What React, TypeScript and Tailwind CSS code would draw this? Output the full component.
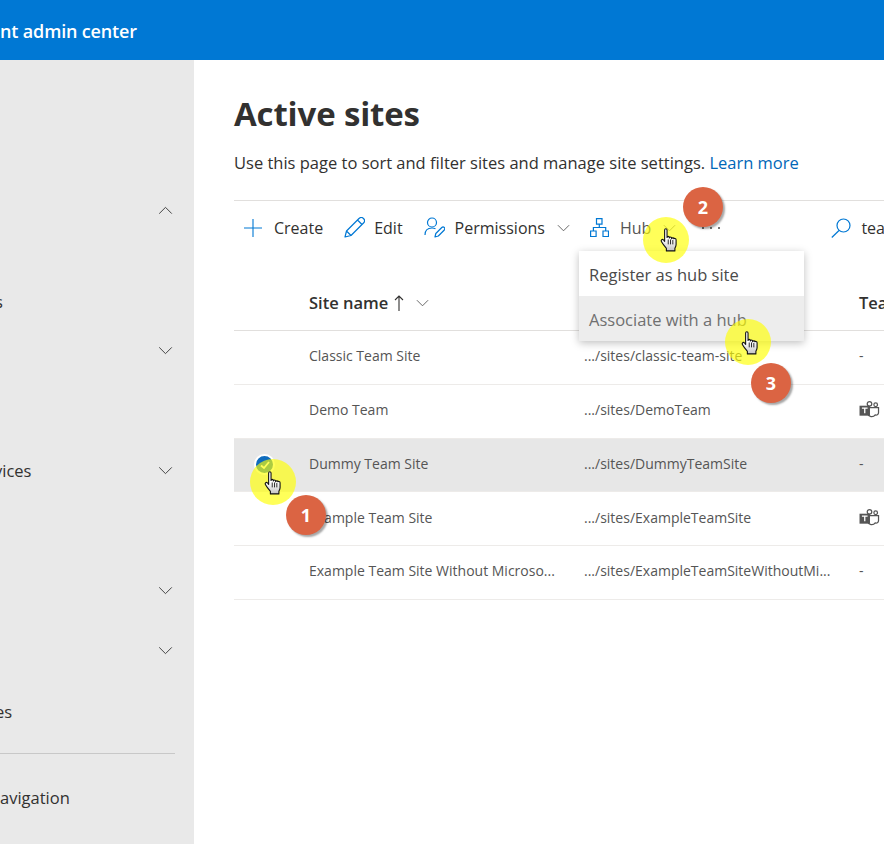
const sideRows = [
  { label: "", gap: "mt-0", chevron: "up", shift: "" },
  { label: "s", gap: "mt-[52px]", chevron: "", shift: "-ml-[5px]" },
  { label: "", gap: "mt-2", chevron: "down", shift: "" },
  { label: "vices", gap: "mt-20", chevron: "down", shift: "-ml-[6px] pt-[3px]" },
  { label: "", gap: "mt-20", chevron: "down", shift: "" },
  { label: "", gap: "mt-5", chevron: "down", shift: "" },
  { label: "es", gap: "mt-[22px]", chevron: "", shift: "-ml-[5px]" },
];

const sites = [
  { name: "Classic Team Site", url: ".../sites/classic-team-site", teams: false },
  { name: "Demo Team", url: ".../sites/DemoTeam", teams: true },
  { name: "Dummy Team Site", url: ".../sites/DummyTeamSite", teams: false, selected: true },
  { name: "Example Team Site", url: ".../sites/ExampleTeamSite", teams: true },
  { name: "Example Team Site Without Microso...", url: ".../sites/ExampleTeamSiteWithoutMi...", teams: false },
];

const ThinChevron = ({ className }: { className: string }) => (
  <svg viewBox="0 0 16 10" className={className} fill="none" stroke="currentColor" strokeWidth="1.1">
    <path d="M1 1.500 8 8.500 15 1.500" />
  </svg>
);

const TeamsIcon = () => (
  <svg viewBox="0 0 22 20" className="h-[19px] w-[21px] text-[#555555]">
    <circle cx="11" cy="4" r="2.400" fill="none" stroke="currentColor" strokeWidth="1.300" />
    <circle cx="17.500" cy="5" r="1.900" fill="none" stroke="currentColor" strokeWidth="1.300" />
    <path d="M8 8h12.500v5.500a2.500 2.500 0 0 1-3.500 2.200 4.500 4.500 0 0 1-8-1.500" fill="none" stroke="currentColor" strokeWidth="1.300" />
    <rect x="0.500" y="6" width="11" height="10.500" fill="currentColor" />
    <path d="M3 8.500h6M6 8.500v5.500" stroke="#ffffff" strokeWidth="1.400" />
  </svg>
);

const Hand = ({ className }: { className: string }) => (
  <svg viewBox="0 0 16 22" className={className}>
    <defs>
      <linearGradient id="hand" x1="0" y1="0" x2="0" y2="1">
        <stop offset="0.45" stopColor="#ffffff" />
        <stop offset="1" stopColor="#c4c4c4" />
      </linearGradient>
    </defs>
    <path
      d="M4 1.800C4 .4 6.200.4 6.200 1.800V8.600c0-1.200 2.100-1.200 2.100 0v.6c0-1.200 2.100-1.200 2.100 0v.7c0-1.100 2.100-1.100 2.100 0 .1-.5 2-.6 2 .8v4.400c0 1.500-.6 2.400-1.100 3.400V21H5.600v-2.300C4.500 17.400 2.600 15.200 1 12.400.3 11.200 1.900 9.700 3 11l1 1.300Z"
      fill="url(#hand)"
      stroke="#111111"
      strokeWidth="1"
      strokeLinejoin="round"
    />
    <path d="M7.300 10.500v4.500M9.400 10.500v4.500M11.500 11v4" stroke="#111111" strokeWidth="0.800" />
  </svg>
);

const Badge = ({ n, className }: { n: number; className: string }) => (
  <div
    className={`absolute flex h-10 w-10 items-center justify-center rounded-full bg-[#db6443] text-lg font-bold text-white shadow-[2px_2px_2px_rgba(0,0,0,0.35)] ${className}`}
  >
    {n}
  </div>
);

export default function App() {
  return (
    <div className="relative h-[844px] w-[884px] overflow-hidden bg-white font-['Open_Sans',sans-serif] text-[#323130]">
      <header className="flex h-[60px] items-center bg-[#0078d4] pt-[2px] text-[18px] font-semibold tracking-[-0.15px] text-white">
        <span>nt admin center</span>
      </header>

      <div className="flex h-[784px]">
        <nav className="w-[194px] shrink-0 bg-[#e9e9e9] pt-[130px] text-[16.5px] text-[#323130]">
          {sideRows.map((row, i) => (
            <div key={i} className={`flex h-10 items-center justify-between pr-[21px] ${row.gap}`}>
              <span className={row.shift}>{row.label}</span>
              {row.chevron === "up" && <ThinChevron className="h-[9px] w-[15px] rotate-180 text-[#444444]" />}
              {row.chevron === "down" && <ThinChevron className="h-[9px] w-[15px] text-[#444444]" />}
            </div>
          ))}
          <div className="mt-[21px] mr-[19px] border-t border-[#c8c8c8]" />
          <div className="mt-6 flex h-10 items-center">avigation</div>
        </nav>

        <main className="w-[690px] shrink-0 pl-10 pt-[33px]">
          <h1 className="text-[33px] leading-[42px] font-bold tracking-[-0.15px]">Active sites</h1>
          <p className="mt-4 whitespace-nowrap text-[16.5px] leading-6">
            Use this page to sort and filter sites and manage site settings.{" "}
            <span className="text-[#0067b8]">Learn more</span>
          </p>

          <div className="mt-[25px] flex h-[54px] items-center whitespace-nowrap border-t border-[#e1dfdd] pl-[10px] text-[16px]">
            <svg viewBox="0 0 18 18" className="h-[18px] w-[18px] shrink-0 text-[#0078d4]" fill="none" stroke="currentColor" strokeWidth="1.100">
              <path d="M9 0v18M0 9h18" />
            </svg>
            <span className="ml-3">Create</span>
            <svg viewBox="0 0 21 21" className="ml-[21px] h-[21px] w-[21px] shrink-0 text-[#0078d4]" fill="none" stroke="currentColor" strokeWidth="1.200">
              <path d="M1 20l1.500-6L15 1.500a2.500 2.500 0 0 1 4.500 4.500L7 18.500ZM2.500 14 7 18.500M13.500 3 18 7.500" strokeLinejoin="round" />
            </svg>
            <span className="ml-[9px]">Edit</span>
            <svg viewBox="0 0 21 21" className="ml-[21px] h-[21px] w-[21px] shrink-0 text-[#0078d4]" fill="none" stroke="currentColor" strokeWidth="1.200">
              <circle cx="8" cy="5.500" r="4.500" />
              <path d="M1 18c0-4 2-7 7-7 1.500 0 2.500.3 3.500.8M11 20l.8-3.500 6-6a1.700 1.700 0 0 1 2.500 2.500l-6 6Z" strokeLinejoin="round" />
            </svg>
            <span className="ml-[10px]">Permissions</span>
            <ThinChevron className="ml-3 h-2 w-[13px] shrink-0 text-[#555555]" />
            <svg viewBox="0 0 19 19" className="ml-5 h-[19px] w-[19px] shrink-0 text-[#0078d4]" fill="none" stroke="currentColor" strokeWidth="1.200">
              <path d="M6.500.6h5.500v5.500H6.500ZM.6 13h5.500v5.500H.6ZM13 13h5.500v5.500H13ZM9.300 6v3.500M3.400 13V9.500h12.300V13" />
            </svg>
            <span className="ml-[11px] text-[#555555]">Hub</span>
            <ThinChevron className="ml-[11px] h-2 w-[15px] shrink-0 text-[#777777]" />
            <span className="ml-[25px] flex shrink-0 gap-[6px]">
              <i className="h-[2px] w-[2px] rounded-full bg-[#444444]" />
              <i className="h-[2px] w-[2px] rounded-full bg-[#444444]" />
              <i className="h-[2px] w-[2px] rounded-full bg-[#444444]" />
            </span>
            <svg viewBox="0 0 20 20" className="ml-[111px] h-5 w-5 shrink-0 text-[#0078d4]" fill="none" stroke="currentColor" strokeWidth="1.200">
              <circle cx="12.500" cy="7.500" r="6.500" />
              <path d="M8 12.500.8 19.500" />
            </svg>
            <span className="ml-[10px] shrink-0">team</span>
          </div>

          <div className="mt-[22px] flex h-[55px] items-center whitespace-nowrap border-b border-[#e1dfdd] text-[16.5px] font-semibold">
            <div className="flex w-[625px] shrink-0 items-center pl-[75px]">
              <span>Site name</span>
              <svg viewBox="0 0 10 16" className="ml-[6px] h-4 w-[10px] text-[#323130]" fill="none" stroke="currentColor" strokeWidth="1.100">
                <path d="M5 16V1M1 5l4-4 4 4" />
              </svg>
              <ThinChevron className="ml-[11px] h-2 w-[15px] text-[#555555]" />
            </div>
            <span className="shrink-0">Teams</span>
          </div>

          {sites.map((site) => (
            <div
              key={site.name}
              className={`flex h-[53.8px] items-center whitespace-nowrap border-b border-[#edebe9] pb-[3.5px] text-[14px] text-[#555555] ${site.selected ? "bg-[#e7e7e7]" : ""}`}
            >
              <div className="flex w-[75px] shrink-0 pl-[20px] pt-[3px]">
                {site.selected && (
                  <div className="flex h-[21px] w-[21px] items-center justify-center rounded-full border-2 border-white bg-[#0f6cbd]">
                    <svg viewBox="0 0 12 12" className="h-3 w-3" fill="none" stroke="#ffffff" strokeWidth="1.800">
                      <path d="M2 6.500 5 9l5-6" />
                    </svg>
                  </div>
                )}
              </div>
              <div className="w-[275px] shrink-0">{site.name}</div>
              <div className="w-[275px] shrink-0">{site.url}</div>
              {site.teams ? <TeamsIcon /> : <span>-</span>}
            </div>
          ))}
        </main>
      </div>

      {/* dropdown over the table */}
      <div className="absolute left-[579px] top-[251px] w-[225px] bg-white text-[16.5px] shadow-[0_2px_8px_rgba(0,0,0,0.25)]">
        <div className="flex h-[45px] items-center pl-[10px] pt-[3px] text-[#4a4a4a]">Register as hub site</div>
        <div className="flex h-[45px] items-center bg-[#ededed] pl-[10px] pt-[3px] text-[#707070]">Associate with a hub</div>
      </div>

      {/* tutorial highlights */}
      <div className="absolute left-[250px] top-[459px] h-[46px] w-[46px] rounded-full bg-[#ffff00]/65" />
      <div className="absolute left-[643px] top-[217px] h-[46px] w-[46px] rounded-full bg-[#ffff00]/65" />
      <div className="absolute left-[725px] top-[319px] h-[46px] w-[46px] rounded-full bg-[#ffff00]/65" />
      <Hand className="absolute left-[264px] top-[471px] h-6 w-[18px]" />
      <Hand className="absolute left-[660px] top-[228px] h-6 w-[18px]" />
      <Hand className="absolute left-[741px] top-[331px] h-6 w-[18px]" />
      <Badge n={1} className="left-[286px] top-[495px]" />
      <Badge n={2} className="left-[683px] top-[187px]" />
      <Badge n={3} className="left-[751px] top-[363px]" />
    </div>
  );
}
